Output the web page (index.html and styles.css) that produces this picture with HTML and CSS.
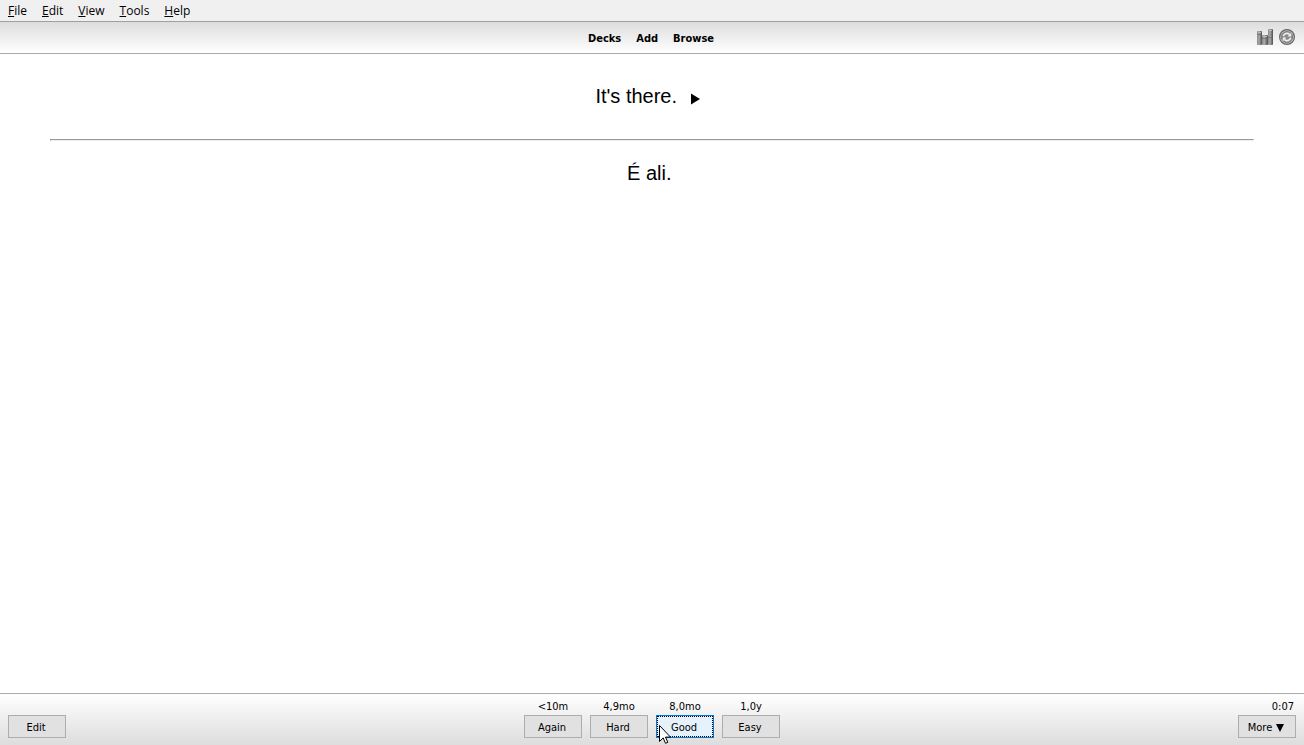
FILE: index.html
```html
<!DOCTYPE html>
<html lang="en">
<head>
<meta charset="utf-8">
<title>Anki</title>
<link rel="stylesheet" href="styles.css">
</head>
<body>
<nav class="menubar">
  <a href="#"><u>F</u>ile</a>
  <a href="#"><u>E</u>dit</a>
  <a href="#"><u>V</u>iew</a>
  <a href="#"><u>T</u>ools</a>
  <a href="#"><u>H</u>elp</a>
</nav>
<header class="toolbar">
  <nav class="links">
    <a href="#">Decks</a>
    <a href="#">Add</a>
    <a href="#">Browse</a>
  </nav>
  <div class="tools">
    <a href="#" aria-label="Statistics">
      <svg width="16" height="16" viewBox="0 0 16 16">
        <defs>
          <linearGradient id="bar"><stop offset="0" stop-color="#888"/><stop offset=".4" stop-color="#aaa"/><stop offset="1" stop-color="#4c4c4c"/></linearGradient>
        </defs>
        <g fill="url(#bar)">
          <rect x="0" y="2" width="5" height="14" rx="1"/>
          <rect x="5" y="6" width="6" height="10" rx="1"/>
          <rect x="11" y="0" width="5" height="16" rx="1"/>
        </g>
        <path d="M1 3.500h3M6 7.500h4M12 1.500h3" stroke="#bbb"/>
        <path d="M0 5.500h5M5 9.500h6M11 8.500h5" stroke="#666" stroke-opacity=".6"/>
      </svg>
    </a>
    <a href="#" aria-label="Synchronize">
      <svg width="16" height="16" viewBox="0 0 16 16">
        <circle cx="8" cy="8" r="7.400" fill="#c4c4c4" stroke="#666" stroke-width="1.200"/>
        <circle cx="8" cy="8" r="5.600" fill="#8a8a8a" stroke="#777" stroke-width=".8"/>
        <path d="M4.300 7.300A3.800 3.800 0 0 1 10.500 5.300M11.700 8.700A3.800 3.800 0 0 1 5.500 10.700" fill="none" stroke="#f0f0f0" stroke-width="1.600"/>
        <path d="M12.200 3.800v3.700H8.500zM3.800 12.200V8.500h3.700z" fill="#f0f0f0"/>
      </svg>
    </a>
  </div>
</header>
<main class="card">
  <div class="front">It's there.
    <a class="replay" href="#" aria-label="Replay audio"><svg width="26" height="12" viewBox="0 0 26 12"><path d="M8 .5v11L17 6z"/></svg></a>
  </div>
  <hr>
  <div class="back">É ali.&nbsp;</div>
</main>
<footer class="bottom">
  <div class="side"><button>Edit</button></div>
  <div class="answers">
    <div class="answer"><label for="again">&lt;10m</label><button id="again">Again</button></div>
    <div class="answer"><label for="hard">4,9mo</label><button id="hard">Hard</button></div>
    <div class="answer">
      <label for="good">8,0mo</label><button id="good" class="focused">Good</button>
      <svg class="cursor" width="12" height="19" viewBox="0 0 12 19"><path d="M.5.500v16l3.700-3.600 2.300 5.400 2.300-1-2.300-5.200h5z" fill="#fff" stroke="#000"/></svg>
    </div>
    <div class="answer"><label for="easy">1,0y</label><button id="easy">Easy</button></div>
  </div>
  <div class="side end"><span class="time">0:07</span><button>More <svg width="8" height="8" viewBox="0 0 8 8"><path d="M0 0h8L4 8z"/></svg></button></div>
</footer>
</body>
</html>
```
FILE: styles.css
```css
* { box-sizing: border-box; }
body {
  margin: 0;
  height: 100vh;
  display: flex;
  flex-direction: column;
  background: #fff;
  color: #000;
  font: 11px/14px "DejaVu Sans Condensed", "DejaVu Sans", sans-serif;
}
a { color: inherit; text-decoration: none; }
svg { display: block; }
.menubar {
  display: flex;
  gap: 15px;
  height: 21px;
  padding: 0 8px;
  background: #f0f0f0;
  font: 12px/22px "Open Sans", sans-serif;
}
.menubar u { text-underline-offset: 1px; }
.toolbar {
  display: grid;
  grid-template-columns: 1fr auto 1fr;
  align-items: center;
  height: 33px;
  padding: 0 9px;
  border-top: 1px solid #a0a0a0;
  border-bottom: 1px solid #aaa;
  background: linear-gradient(#ddd, #fff);
}
.links {
  grid-column: 2;
  display: flex;
  gap: 15px;
  padding: 2px 2px 0 0;
  font-weight: bold;
}
.tools {
  display: flex;
  gap: 6px;
  justify-content: flex-end;
  padding-bottom: 2px;
}
.card {
  flex: 1;
  padding: 30px 50px;
  font: 20px/24px "Liberation Sans", Arial, sans-serif;
  text-align: center;
}
.replay svg {
  display: inline-block;
  vertical-align: -2px;
}
.card hr { margin: 31px 0 20px; }
.bottom {
  display: grid;
  grid-template-columns: 1fr auto 1fr;
  align-items: end;
  padding: 6px 8px 7px;
  border-top: 1px solid #aaa;
  background: linear-gradient(#fff, #ddd);
}
.answers { display: flex; gap: 8px; }
.answer {
  position: relative;
  display: flex;
  flex-direction: column;
  align-items: center;
  gap: 1px;
}
.side { display: flex; flex-direction: column; align-items: flex-start; gap: 1px; }
.end { align-items: flex-end; }
.time { padding-right: 2px; }
button {
  display: flex;
  align-items: center;
  justify-content: center;
  gap: 4px;
  width: 58px;
  height: 23px;
  padding: 2px 2px 0 0;
  border: 1px solid #adadad;
  background: #e1e1e1;
  color: #000;
  font: inherit;
}
.focused {
  border-color: #0078d7;
  background: #e5f1fb;
  outline: 1px dotted #000;
  outline-offset: -2px;
}
.cursor { position: absolute; left: 3px; top: 25px; }
```
